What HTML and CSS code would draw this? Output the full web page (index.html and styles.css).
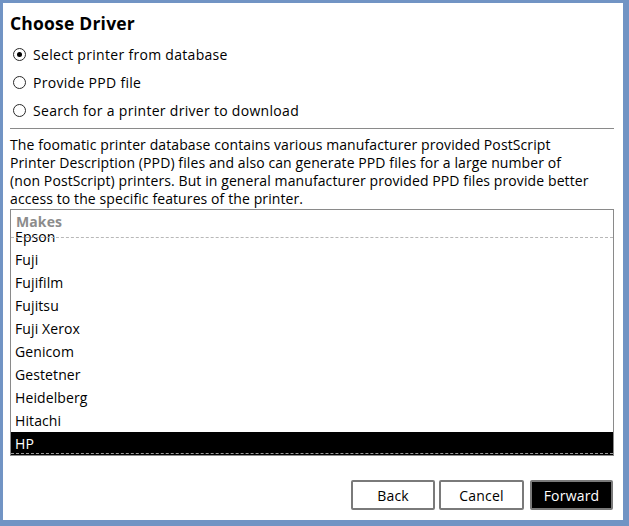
FILE: index.html
```html
<!DOCTYPE html>
<html>
<head>
<meta charset="utf-8">
<link rel="stylesheet" href="styles.css">
</head>
<body>
<div class="window">
  <h1 class="title">Choose Driver</h1>
  <div class="radios">
    <label class="radio"><span class="circle checked"></span><span>Select printer from database</span></label>
    <label class="radio"><span class="circle"></span><span>Provide PPD file</span></label>
    <label class="radio"><span class="circle"></span><span>Search for a printer driver to download</span></label>
  </div>
  <div class="sep"></div>
  <p class="desc">The foomatic printer database contains various manufacturer provided PostScript<br>Printer Description (PPD) files and also can generate PPD files for a large number of<br>(non PostScript) printers. But in general manufacturer provided PPD files provide better<br>access to the specific features of the printer.</p>
  <div class="listbox">
    <div class="header">Makes</div>
    <div class="viewport">
      <div class="row">Dymo</div>
      <div class="row">Epson</div>
      <div class="row">Fuji</div>
      <div class="row">Fujifilm</div>
      <div class="row">Fujitsu</div>
      <div class="row">Fuji Xerox</div>
      <div class="row">Genicom</div>
      <div class="row">Gestetner</div>
      <div class="row">Heidelberg</div>
      <div class="row">Hitachi</div>
      <div class="row selected">HP</div>
    </div>
  </div>
  <div class="buttons">
    <button class="btn back">Back</button>
    <button class="btn cancel">Cancel</button>
    <button class="btn primary">Forward</button>
  </div>
</div>
</body>
</html>
```
FILE: styles.css
```css
html, body {
  margin: 0;
  padding: 0;
}
body {
  background: #7194c4;
  width: 629px;
  height: 526px;
  padding: 3px 6px 6px 3px;
  box-sizing: border-box;
  font-family: "Open Sans", "Noto Sans", sans-serif;
  font-size: 14px;
  letter-spacing: 0.1px;
  color: #000;
}
.window {
  background: #fff;
  width: 620px;
  height: 517px;
  box-sizing: border-box;
  padding: 8px 9px 0 7px;
  display: flex;
  flex-direction: column;
}
.title {
  margin: 0;
  font-size: 17.5px;
  letter-spacing: 0.2px;
  font-weight: 700;
  line-height: 24px;
  height: 24px;
}
.radios {
  margin-top: 5px;
  display: flex;
  flex-direction: column;
}
.radio {
  height: 28px;
  display: flex;
  align-items: center;
  gap: 7px;
  padding-left: 3px;
  font-size: 14px;
  letter-spacing: 0.3px;
}
.circle {
  width: 11px;
  height: 11px;
  border: 1px solid #2a2a2a;
  border-radius: 50%;
  display: flex;
  align-items: center;
  justify-content: center;
  flex: none;
}
.circle.checked::after {
  content: "";
  width: 5px;
  height: 5px;
  border-radius: 50%;
  background: #000;
}
.sep {
  margin-top: 4px;
  height: 1px;
  background: #8a8a8a;
}
.desc {
  margin: 7px 0 0;
  line-height: 18px;
  white-space: nowrap;
}
.listbox {
  margin-top: 1px;
  border: 1px solid #8a8a8a;
  height: 245px;
  display: flex;
  flex-direction: column;
}
.header {
  height: 22px;
  line-height: 24px;
  padding-left: 5px;
  font-weight: 700;
  color: #8c8c8c;
  flex: none;
  position: relative;
  z-index: 2;
  background: #fff;
}
.viewport {
  position: relative;
  flex: 1;
  overflow: hidden;
  display: flex;
  flex-direction: column;
  justify-content: flex-end;
}
.viewport::before {
  content: "";
  position: absolute;
  left: 0;
  right: 0;
  top: 5px;
  border-top: 1px dashed #b8b8b8;
  z-index: 1;
}
.row {
  height: 23px;
  line-height: 23px;
  padding-left: 4px;
  flex: none;
}
.row.selected {
  background: #000;
  color: #fff;
  position: relative;
}
.row.selected::after {
  content: "";
  position: absolute;
  left: 0;
  right: 0;
  bottom: 1px;
  border-bottom: 1px dashed #9a9a9a;
}
.buttons {
  margin-top: 24px;
  display: flex;
  justify-content: flex-end;
  gap: 4px;
  padding-right: 1px;
}
.btn {
  height: 30px;
  border: 2px solid #7a7a7a;
  border-radius: 2px;
  background: #fff;
  color: #000;
  font-family: inherit;
  font-size: 14px;
  letter-spacing: 0.2px;
  padding: 0;
}
.back { width: 84px; }
.cancel { width: 85px; }
.primary {
  width: 83px;
  background: #000;
  color: #fff;
  margin-left: 2px;
}
```
